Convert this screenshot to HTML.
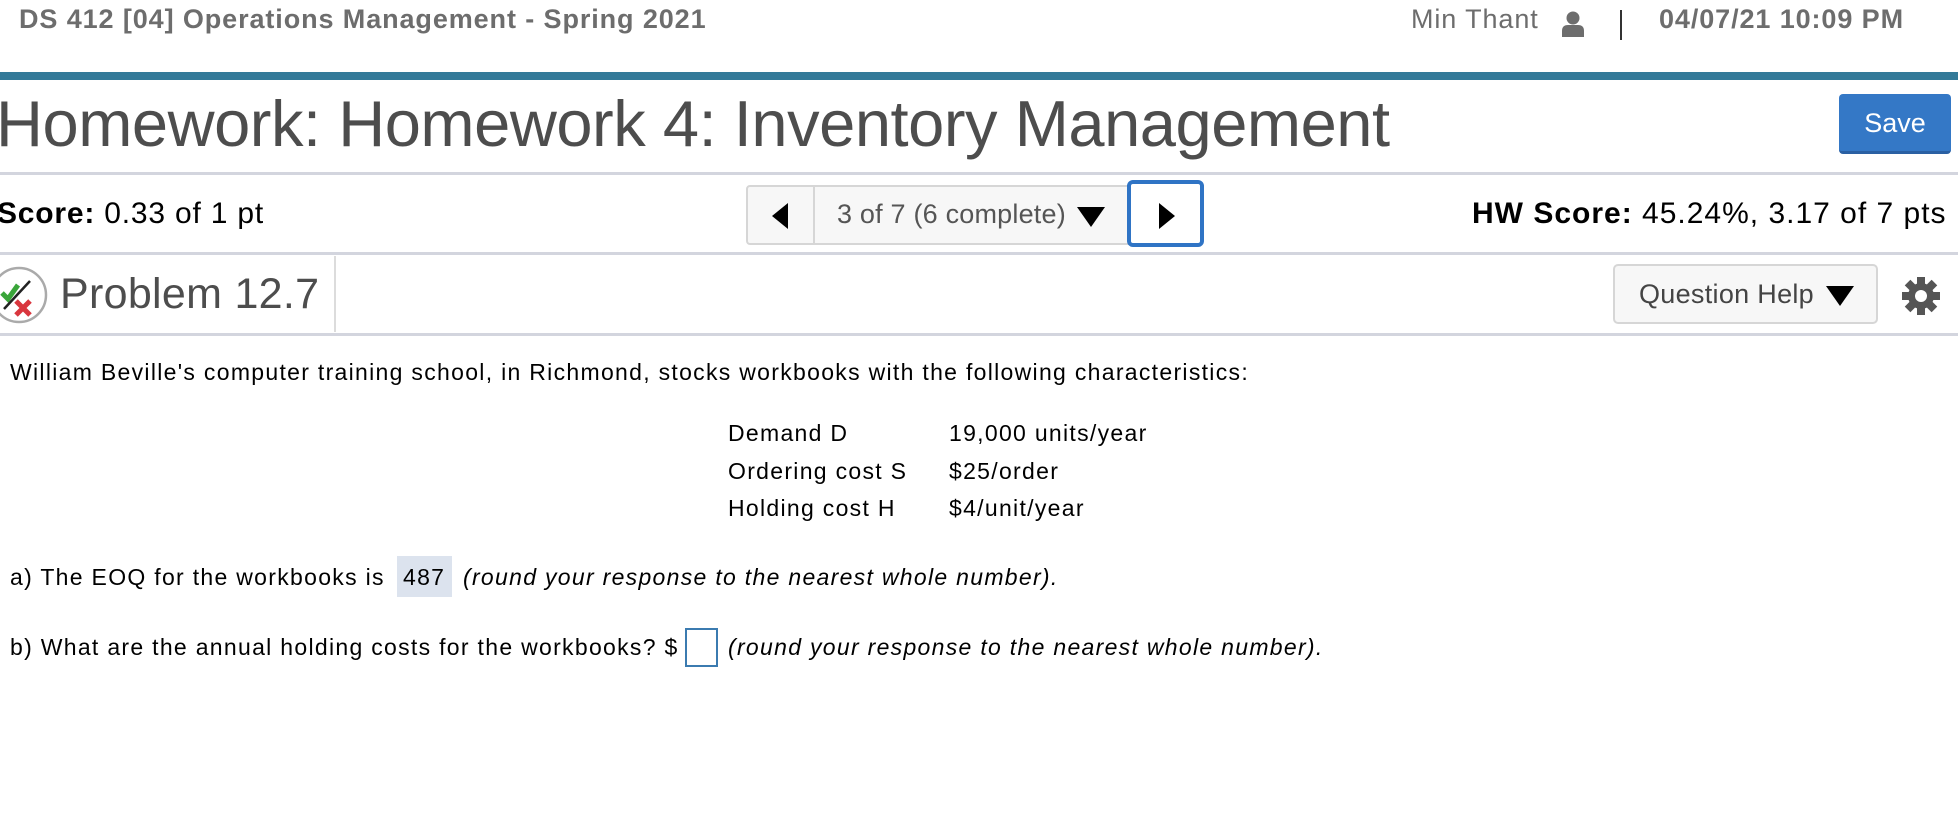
<!DOCTYPE html>
<html><head><meta charset="utf-8"><style>
*{margin:0;padding:0;box-sizing:border-box}
body{width:1958px;height:828px;background:#fff;position:relative;overflow:hidden;font-family:"Liberation Sans",Arial,sans-serif}
.a{position:absolute;white-space:nowrap}
.hdr{font-size:27px;color:#6d6d6d;font-weight:bold;top:4px;letter-spacing:0.9px}
.line{position:absolute;left:0;width:1958px;height:3px;background:#d3d5de}
.t{font-size:23px;color:#000;letter-spacing:1.3px}
</style></head><body>
<div class="a hdr" style="left:19px">DS 412 [04] Operations Management - Spring 2021</div>
<div class="a hdr" style="left:1411px;font-weight:normal">Min Thant</div>
<svg class="a" style="left:1561px;top:11px" width="24" height="26" viewBox="0 0 24 26"><circle cx="12" cy="7" r="6.5" fill="#6d6d6d"/><path d="M1 26 V20 Q1 14 7 14 H17 Q23 14 23 20 V26Z" fill="#6d6d6d"/></svg>
<div class="a" style="left:1620px;top:10px;width:2px;height:30px;background:#333"></div>
<div class="a hdr" style="left:1659px">04/07/21 10:09 PM</div>
<div class="a" style="left:0;top:72px;width:1958px;height:8px;background:#337a99"></div>
<div class="a" style="left:-4px;top:86px;font-size:65px;color:#4d4d4d;letter-spacing:-0.45px">Homework: Homework 4: Inventory Management</div>
<div class="a" style="left:1839px;top:94px;width:112px;height:60px;background:#3478c6;border-radius:4px;border-bottom:3px solid #2a60a3;color:#fff;font-size:27px;text-align:center;line-height:58px">Save</div>
<div class="line" style="top:172px"></div>
<div class="a" style="left:-3px;top:197px;font-size:30px;color:#000;letter-spacing:0.8px"><b>Score:</b> 0.33 of 1 pt</div>
<div class="a" style="left:746px;top:185px;width:440px;height:60px;border:2px solid #d6d6d6;border-radius:4px;background:#f7f7f7"></div>
<div class="a" style="left:813px;top:187px;width:2px;height:56px;background:#d6d6d6"></div>
<svg class="a" style="left:770px;top:203px" width="20" height="26"><path d="M18 0 L2 13 L18 26Z" fill="#000"/></svg>
<div class="a" style="left:837px;top:199px;font-size:27px;color:#555;letter-spacing:0.2px">3 of 7 (6 complete)</div>
<svg class="a" style="left:1077px;top:207px" width="28" height="20"><path d="M0 0 H28 L14 20Z" fill="#000"/></svg>
<div class="a" style="left:1127px;top:180px;width:77px;height:67px;border:4px solid #2f74c5;border-radius:6px;background:#fff"></div>
<svg class="a" style="left:1157px;top:203px" width="20" height="26"><path d="M2 0 L18 13 L2 26Z" fill="#000"/></svg>
<div class="a" style="left:1472px;top:197px;font-size:30px;color:#000;letter-spacing:1px"><b>HW Score:</b> 45.24%, 3.17 of 7 pts</div>
<div class="line" style="top:252px"></div>
<svg class="a" style="left:-10px;top:265px" width="60" height="60" viewBox="0 0 60 60"><circle cx="29" cy="30" r="27" fill="#fff" stroke="#aaa" stroke-width="2.5"/><path d="M12 28 L18 34 L28 20" fill="none" stroke="#3aa53a" stroke-width="5"/><path d="M14 44 L40 16" stroke="#222" stroke-width="2.5"/><path d="M26 36 L40 50 M40 36 L26 50" stroke="#d9363e" stroke-width="5"/></svg>
<div class="a" style="left:60px;top:270px;font-size:43px;color:#4d4d4d;letter-spacing:0.3px">Problem 12.7</div>
<div class="a" style="left:334px;top:256px;width:2px;height:76px;background:#dcdcdc"></div>
<div class="a" style="left:1613px;top:264px;width:265px;height:60px;border:2px solid #d6d6d6;border-radius:5px;background:#f7f7f7"></div>
<div class="a" style="left:1639px;top:279px;font-size:27px;color:#444;letter-spacing:0.3px">Question Help</div>
<svg class="a" style="left:1826px;top:286px" width="28" height="20"><path d="M0 0 H28 L14 20Z" fill="#000"/></svg>
<svg class="a" style="left:1901px;top:276px" width="40" height="40" viewBox="-20 -20 40 40"><g fill="#555"><circle r="13"/><rect x="-4" y="-19" width="8" height="38"/><rect x="-4" y="-19" width="8" height="38" transform="rotate(45)"/><rect x="-4" y="-19" width="8" height="38" transform="rotate(90)"/><rect x="-4" y="-19" width="8" height="38" transform="rotate(135)"/></g><circle r="6" fill="#fff"/></svg>
<div class="line" style="top:333px"></div>
<div class="a t" style="left:10px;top:359px">William Beville's computer training school, in Richmond, stocks workbooks with the following characteristics:</div>
<div class="a t" style="left:728px;top:420px">Demand D</div>
<div class="a t" style="left:949px;top:420px">19,000 units/year</div>
<div class="a t" style="left:728px;top:458px">Ordering cost S</div>
<div class="a t" style="left:949px;top:458px">$25/order</div>
<div class="a t" style="left:728px;top:495px">Holding cost H</div>
<div class="a t" style="left:949px;top:495px">$4/unit/year</div>
<div class="a" style="left:397px;top:556px;width:55px;height:41px;background:#dce3ee"></div>
<div class="a t" style="left:10px;top:564px">a) The EOQ for the workbooks is</div>
<div class="a t" style="left:403px;top:564px">487</div>
<div class="a t" style="left:463px;top:564px"><i>(round your response to the nearest whole number).</i></div>
<div class="a t" style="left:10px;top:634px">b) What are the annual holding costs for the workbooks? $</div>
<div class="a" style="left:685px;top:628px;width:33px;height:39px;border:2px solid #3b7bb0"></div>
<div class="a t" style="left:728px;top:634px"><i>(round your response to the nearest whole number).</i></div>
</body></html>
